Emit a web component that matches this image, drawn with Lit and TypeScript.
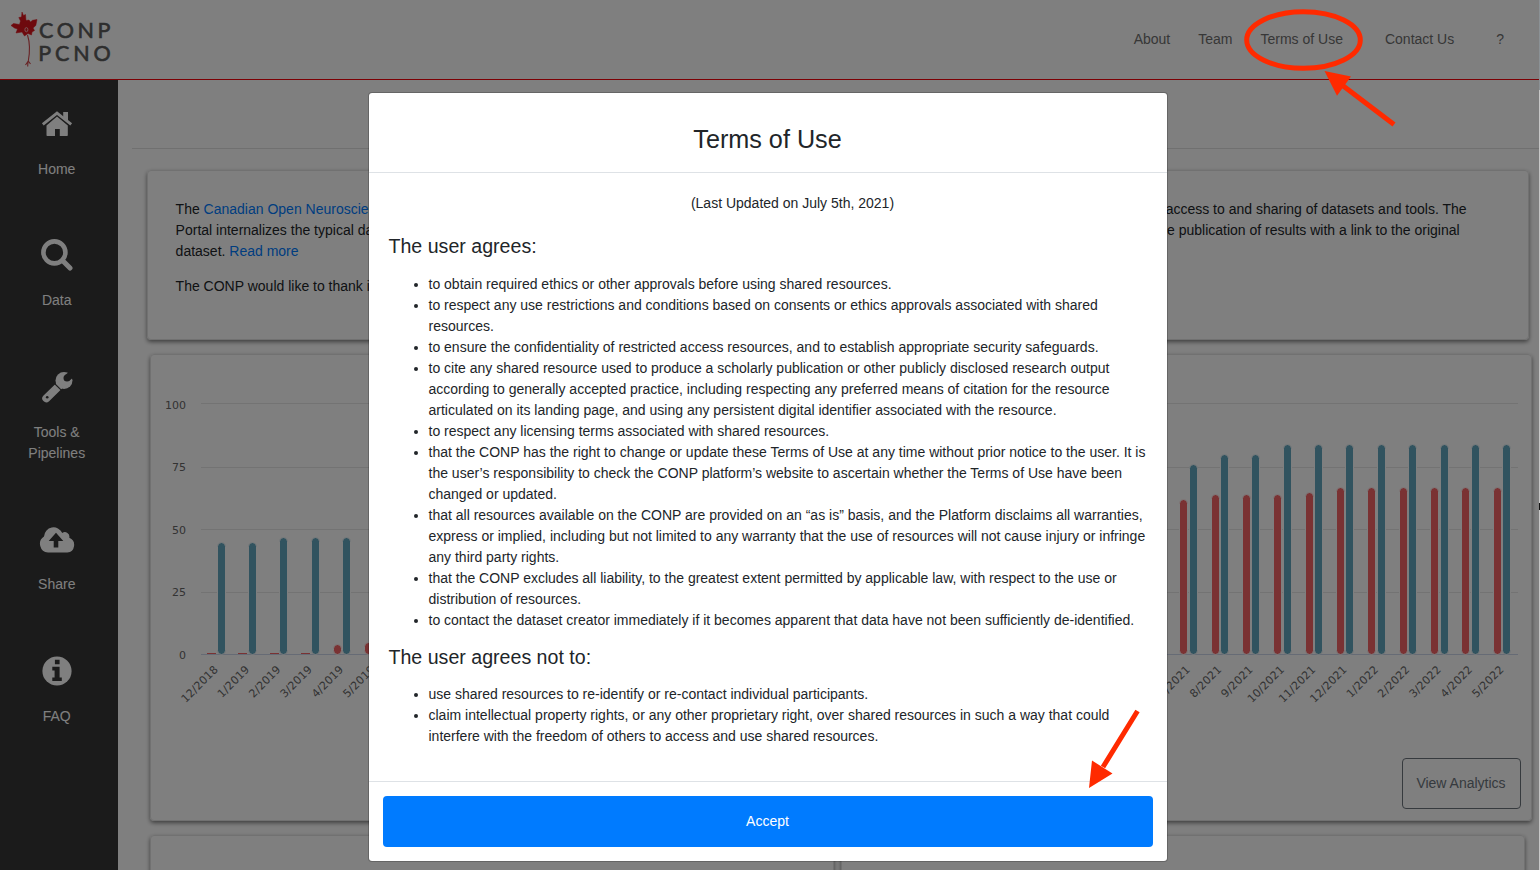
import { LitElement, html, css, svg } from "lit";
import { customElement } from "lit/decorators.js";

const PLOT_LEFT = 50;
const STEP = 31.36;
const UNIT = 2.505;

const datasets = [0, 0, 0, 0, 3.6, 4.4, 8, 10, 12, 15, 18, 20, 22, 24, 26, 28, 30, 32, 35, 37, 39, 41, 44, 46, 48, 50, 52, 54, 56, 58, 60, 61.3, 63.5, 63.5, 63.5, 64.3, 66.3, 66.3, 66.3, 66.3, 66.3, 66.3];
const tools = [44.3, 44.3, 46.3, 46.3, 46.3, 47, 48, 49, 50, 51, 52, 53, 54, 55, 56, 57, 58, 59, 60, 61, 62, 63, 64, 65, 66, 67, 68, 70, 71, 72, 74, 75.5, 79.5, 79.5, 83.4, 83.4, 83.4, 83.4, 83.4, 83.4, 83.4, 83.4];
const months = tools.map((_, i) => `${((i + 11) % 12) + 1}/${2018 + Math.floor((i + 11) / 12)}`);

const home = svg`<svg width="32" height="26" viewBox="0 0 32 26"><path d="M16 5.600 26.800 14.600V24.200Q26.800 25 26 25H18.800V18H14V25H6.300Q5.500 25 5.500 24.200V14.600Z"/><path d="M1.800 13.300 16 2.200 30.200 13.300" fill="none" stroke="currentColor" stroke-width="2.900"/><path d="M22.200 1H27V10L22.200 6.300Z"/></svg>`;
const search = svg`<svg width="32" height="32" viewBox="0 0 32 32" fill="none" stroke="currentColor"><circle cx="13.400" cy="13.400" r="11" stroke-width="4.600"/><path d="M21.500 21.500 29 29" stroke-width="5" stroke-linecap="round"/></svg>`;
const wrench = svg`<svg width="32" height="32" viewBox="0 0 32 32"><circle cx="23" cy="9.400" r="8.500"/><path d="M18 15 5.300 27.300" stroke="currentColor" stroke-width="8" stroke-linecap="round" fill="none"/><g fill="#363636"><circle cx="26" cy="7" r="3.500"/><path d="M23.800 4.200 28.500 .4 34 0 33 6 28.600 9.400Z"/><circle cx="6.200" cy="26.300" r="1.300"/></g><path d="M13 12 21 19.800" stroke="#363636" stroke-width="1.100" fill="none"/></svg>`;
const cloud = svg`<svg width="36" height="27" viewBox="0 0 36 27"><path d="M9 26.500A8.700 8.700 0 0 1 5 10.500 9.600 9.600 0 0 1 23.300 6.900 4.600 4.600 0 0 1 30.300 11.700 7.700 7.700 0 0 1 28.300 26.500Z"/><path d="M17 6.800 24.300 14.900H19.300V21.500H14.700V14.900H9.700Z" fill="#363636"/></svg>`;
const info = svg`<svg width="30" height="30" viewBox="0 0 30 30"><circle cx="15" cy="15" r="14.600"/><path d="M12.900 3.800H17.600V8.200H12.900ZM10.300 10.800H17.600V21.400H19.800V25H10.300V21.400H12.600V14.400H10.300Z" fill="#363636"/></svg>`;

@customElement("side-nav")
class SideNav extends LitElement {
  static styles = css`
    :host { display: block; width: 118px; flex: none; background: #363636; color: #fff; }
    .item { display: flex; flex-direction: column; align-items: center; width: 113.500px; padding-bottom: 57.4px; }
    .icon { display: grid; place-items: center; height: 36px; margin-bottom: 17px; }
    .label { line-height: 21px; text-align: center; }
    .list { padding-top: 26px; }
    svg { display: block; fill: currentColor; }
    svg[fill="none"] { fill: none; }
  `;
  render() {
    const items: [unknown, unknown][] = [
      [home, "Home"], [search, "Data"], [wrench, html`Tools &amp;<br />Pipelines`], [cloud, "Share"], [info, "FAQ"],
    ];
    return html`<div class="list">${items.map(([icon, label]) => html`<div class="item"><div class="icon">${icon}</div><div class="label">${label}</div></div>`)}</div>`;
  }
}

@customElement("stats-chart")
class StatsChart extends LitElement {
  static styles = css`
    :host { display: block; }
    svg { display: block; }
    text { font: 11px "DejaVu Sans", sans-serif; fill: #666; }
    .month { letter-spacing: 0.15px; }
    .red { fill: #f46466; }
    .blue { fill: #62a6be; }
  `;
  bar(x: number, value: number, kind: string) {
    if (value === 0) return svg`<rect x=${x - 1} y="298" width="9" height="1" class=${kind} />`;
    const h = Math.round(value * UNIT);
    return svg`<rect x=${x - 0.5} y=${298.5 - h} width="8" height=${h + 1} rx="4" stroke="#fff" class=${kind} />`;
  }
  render() {
    return html`<svg width="1380" height="380" viewBox="0 0 1380 380">
      ${[100, 75, 50, 25, 0].map((v, i) => {
        const y = [48.5, 112.5, 174.5, 237.5, 299.5][i];
        return svg`<line x1="50" x2="1367" y1=${y} y2=${y} stroke=${v ? "#e6e6e6" : "#ccd6eb"} /><text x="35" y=${Math.floor(54 + i * 62.5)} text-anchor="end">${v}</text>`;
      })}
      ${months.map((m, i) => {
        const x = PLOT_LEFT + i * STEP;
        return svg`${this.bar(Math.floor(x + 7.57), datasets[i], "red")}${this.bar(Math.floor(x + 17), tools[i], "blue")}
          <text class="month" text-anchor="end" transform="translate(${x + 17.7} ${315.2}) rotate(-45)">${m}</text>`;
      })}
    </svg>`;
  }
}

@customElement("terms-dialog")
class TermsDialog extends LitElement {
  static styles = css`
    :host { display: flex; flex-direction: column; box-sizing: border-box; width: 800px; height: 770px; background: #fff; border: 1px solid rgba(0, 0, 0, 0.2); background-clip: padding-box; border-radius: 4px; color: #212529; }
    .head { height: 80px; box-sizing: border-box; border-bottom: 1px solid #dee2e6; padding: 31px 1px 0 0; text-align: center; font-size: 25.2px; line-height: 30px; }
    .body { flex: 1; padding: 20px 19.500px 0; }
    .date { padding-left: 49px; text-align: center; line-height: 21px; margin: 0 0 20px; }
    h2 { font-size: 19.6px; line-height: 24px; font-weight: 400; margin: 0 0 15px; }
    .first { margin-bottom: 16px; }
    ul { margin: 0 0 14px; padding-left: 40px; line-height: 21px; }
    .foot { border-top: 1px solid #dee2e6; padding: 14px; }
    .accept { display: block; width: 100%; height: 51px; border: 0; border-radius: 4px; background: #007bff; color: #fff; font: inherit; padding: 0 1px 0 0; }
  `;
  render() {
    return html`<div class="head">Terms of Use</div>
      <div class="body">
        <p class="date">(Last Updated on July 5th, 2021)</p>
        <h2 class="first">The user agrees:</h2>
        <ul>
          <li>to obtain required ethics or other approvals before using shared resources.</li>
          <li>to respect any use restrictions and conditions based on consents or ethics approvals associated with shared<br />resources.</li>
          <li>to ensure the confidentiality of restricted access resources, and to establish appropriate security safeguards.</li>
          <li>to cite any shared resource used to produce a scholarly publication or other publicly disclosed research output<br />according to generally accepted practice, including respecting any preferred means of citation for the resource<br />articulated on its landing page, and using any persistent digital identifier associated with the resource.</li>
          <li>to respect any licensing terms associated with shared resources.</li>
          <li>that the CONP has the right to change or update these Terms of Use at any time without prior notice to the user. It is<br />the user’s responsibility to check the CONP platform’s website to ascertain whether the Terms of Use have been<br />changed or updated.</li>
          <li>that all resources available on the CONP are provided on an “as is” basis, and the Platform disclaims all warranties,<br />express or implied, including but not limited to any warranty that the use of resources will not cause injury or infringe<br />any third party rights.</li>
          <li>that the CONP excludes all liability, to the greatest extent permitted by applicable law, with respect to the use or<br />distribution of resources.</li>
          <li>to contact the dataset creator immediately if it becomes apparent that data have not been sufficiently de-identified.</li>
        </ul>
        <h2>The user agrees not to:</h2>
        <ul>
          <li>use shared resources to re-identify or re-contact individual participants.</li>
          <li>claim intellectual property rights, or any other proprietary right, over shared resources in such a way that could<br />interfere with the freedom of others to access and use shared resources.</li>
        </ul>
      </div>
      <div class="foot"><button class="accept">Accept</button></div>`;
  }
}

@customElement("app-root")
class AppRoot extends LitElement {
  static styles = css`
    :host { display: block; position: relative; width: 1540px; height: 870px; overflow: hidden; background: #fff; color: #212529; font: 14px/21px "Liberation Sans", Arial, sans-serif; }
    .page { display: flex; flex-direction: column; height: 870px; }
    header { display: flex; justify-content: space-between; height: 79px; border-bottom: 1px solid #f80008; flex: none; }
    .logo { display: block; }
    .logo text { font-family: Lato, sans-serif; font-size: 21.5px; fill: #5c5c5c; stroke: #5c5c5c; stroke-width: 0.6px; }
    nav { display: flex; align-items: center; gap: 28px; padding-right: 36px; color: #6e6e6e; }
    .contact { margin-left: 14px; }
    .help { margin-left: 14px; }
    .main { display: flex; flex: 1; min-height: 0; }
    .content { flex: 1; min-width: 0; overflow: hidden; }
    .rule { height: 68px; margin-left: 14px; border-bottom: 1px solid #e0e0e0; }
    .card { box-sizing: border-box; border: 1px solid #e2e2e2; border-radius: 4px; box-shadow: 0 2px 4px rgba(0, 0, 0, 0.5); }
    .intro { height: 170px; width: 1382px; margin: 21px 0 0 29px; padding: 28px 28px 28px 27.600px; }
    .intro p { margin: 0 0 14px; white-space: nowrap; }
    .line { display: flex; justify-content: space-between; width: 1291px; }
    .second { margin-right: 7px; }
    a { color: #007bff; }
    .chart { display: flex; flex-direction: column; width: 1382px; height: 467px; margin: 14px 0 0 32px; }
    .view { align-self: flex-end; display: grid; place-items: center; box-sizing: border-box; width: 119px; height: 51px; margin: 23px 10px 0 0; padding-right: 1px; border: 1px solid #6c757d; border-radius: 4px; color: #6c757d; }
    .row { display: grid; grid-template-columns: 684px 684px; gap: 7px; height: 80px; margin: 14px 0 0 32px; }
    .shade { position: absolute; inset: 0 1px 0 0; background: rgba(0, 0, 0, 0.5); }
    .edge { position: absolute; right: 0; top: 0; width: 1px; height: 870px; background: linear-gradient(#8b9195 0 90px, #c8c8c8 90px 503px, #111 503px 510px, #c8c8c8 510px); }
    .dialog { position: absolute; left: 368px; top: 92px; }
    .marks { position: absolute; left: 0; top: 0; fill: #ff2a00; stroke: #ff2a00; }
  `;
  render() {
    return html`
      <div class="page">
        <header>
          <svg class="logo" width="120" height="79" viewBox="0 0 120 79">
            <path d="M22 12 23.500 15.500 25.500 14.500 26 20.500 29 20 30.500 22 32.500 20.300 37 19.500 35.800 25.500 33 28 34.500 30.500 32 32 31.500 35 28 33.500 24.500 36 22 32 16 33 17.500 29 14.500 28 11 25.500 13.500 23.500 19.500 24.500 20.500 21 18.800 17.500 21.500 17Z" fill="#dd141c" stroke="#dd141c" stroke-width="0.500"/>
            <path d="M27.500 35Q31 46 28.300 61M28.300 61 25.500 65M28 61 27.700 66.500M28.300 61 30.500 64" fill="none" stroke="#cf4448" stroke-width="1.100"/>
            <ellipse cx="26.400" cy="29.700" rx="1.500" ry="2.100" fill="none" stroke="#f3b5b5" stroke-width="1"/>
            <text x="39" y="38" textLength="71.500">CONP</text>
            <text x="38.300" y="61" textLength="72.500">PCNO</text>
          </svg>
          <nav><span>About</span><span>Team</span><span>Terms of Use</span><span class="contact">Contact Us</span><span class="help">?</span></nav>
        </header>
        <div class="main">
          <side-nav></side-nav>
          <div class="content">
            <div class="rule"></div>
            <section class="card intro">
              <p>
                <span class="line"><span>The <a>Canadian Open Neuroscience</a></span><span>access to and sharing of datasets and tools. The</span></span>
                <span class="line"><span>Portal internalizes the typical data</span><span class="second">the publication of results with a link to the original</span></span>
                <span>dataset. <a>Read more</a></span>
              </p>
              <p>The CONP would like to thank its</p>
            </section>
            <section class="card chart"><stats-chart></stats-chart><div class="view">View Analytics</div></section>
            <div class="row"><div class="card"></div><div class="card"></div></div>
          </div>
        </div>
      </div>
      <div class="shade"></div>
      <div class="edge"></div>
      <terms-dialog class="dialog"></terms-dialog>
      <svg class="marks" width="1540" height="870" viewBox="0 0 1540 870">
        <ellipse cx="1303.500" cy="40" rx="56.800" ry="28.300" fill="none" stroke-width="5"/>
        <path d="M1342 85 1394 124.500M1103 767 1137.500 711" stroke-width="5" fill="none"/>
        <path d="M1324.500 71 1351 76.500 1337 95.700ZM1089 788 1092 760.500 1112.500 773.500Z" stroke="none"/>
      </svg>`;
  }
}
